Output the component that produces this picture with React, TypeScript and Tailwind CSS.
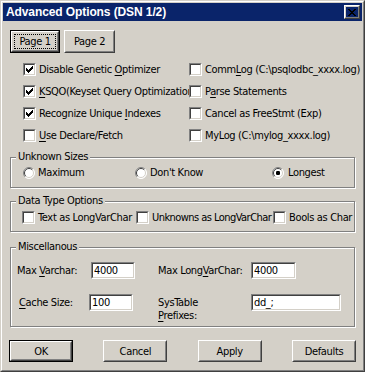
import React from "react";

const F = "font-['Liberation_Sans_Narrow','DejaVu_Sans_Condensed','Arial_Narrow',sans-serif]";

function Raised({ children, className = "", def = false, focus = false }: { children: React.ReactNode; className?: string; def?: boolean; focus?: boolean }) {
  const inner = (
    <div className="h-full w-full border border-t-white border-l-white border-r-[#404040] border-b-[#404040]">
      <div className="h-full w-full border border-t-[#d4d0c8] border-l-[#d4d0c8] border-r-[#808080] border-b-[#808080] flex items-center justify-center">
        {focus ? (
          <div className="h-[calc(100%-2px)] w-[calc(100%-2px)] border border-dotted border-black flex items-center justify-center">{children}</div>
        ) : (
          children
        )}
      </div>
    </div>
  );
  return <div className={`${className} ${def ? "border border-black" : ""}`}>{inner}</div>;
}

function Sunken({ className = "", children }: { className?: string; children?: React.ReactNode }) {
  return (
    <div className={`${className} border border-t-[#808080] border-l-[#808080] border-r-white border-b-white`}>
      <div className="h-full w-full border border-t-[#404040] border-l-[#404040] border-r-[#d4d0c8] border-b-[#d4d0c8] bg-white flex items-center overflow-hidden">
        {children}
      </div>
    </div>
  );
}

function Check({ checked = false }: { checked?: boolean }) {
  return (
    <Sunken className="w-[13px] h-[13px] shrink-0">
      {checked && (
        <svg width="9" height="9" viewBox="0 0 9 9" shapeRendering="crispEdges">
          <path
            fill="#000"
            d="M7 1h1v1h-1z M6 2h2v1h-2z M1 3h1v1h-1z M5 3h3v1h-3z M1 4h2v1h-2z M4 4h3v1h-3z M1 5h5v1h-5z M2 6h3v1h-3z M3 7h1v1h-1z"
          />
        </svg>
      )}
    </Sunken>
  );
}

function Radio({ checked = false }: { checked?: boolean }) {
  return (
    <svg width="12" height="12" viewBox="0 0 12 12" className="shrink-0">
      <circle cx="6" cy="6" r="5.5" fill="#fff" />
      <path d="M2.1 9.9 A5.5 5.5 0 0 1 9.9 2.1" stroke="#808080" strokeWidth="1" fill="none" />
      <path d="M9.9 2.1 A5.5 5.5 0 0 1 2.1 9.9" stroke="#ffffff" strokeWidth="1" fill="none" />
      <path d="M2.8 9.2 A4.5 4.5 0 0 1 9.2 2.8" stroke="#404040" strokeWidth="1" fill="none" />
      <path d="M9.2 2.8 A4.5 4.5 0 0 1 2.8 9.2" stroke="#d4d0c8" strokeWidth="1" fill="none" />
      {checked && <rect x="4" y="4" width="4" height="4" rx="1.2" fill="#000" />}
    </svg>
  );
}

function CheckItem({ label, checked = false, className = "", labelClass = "" }: { label: React.ReactNode; checked?: boolean; className?: string; labelClass?: string }) {
  return (
    <div className={`flex items-center gap-[3px] whitespace-nowrap overflow-hidden ${className}`}>
      <Check checked={checked} />
      <span className={`leading-[13px] ${labelClass}`}>{label}</span>
    </div>
  );
}

function Group({ title, className = "", children }: { title: string; className?: string; children: React.ReactNode }) {
  return (
    <div className={`relative border border-[#808080] shadow-[inset_1px_1px_0_#fff,1px_1px_0_#fff] ${className}`}>
      <span className="absolute left-[5px] top-[-8px] bg-[#d4d0c8] px-[2px] leading-[14px] whitespace-nowrap">{title}</span>
      {children}
    </div>
  );
}

const U = ({ c }: { c: string }) => <span className="underline underline-offset-[2px]">{c}</span>;

export default function App() {
  return (
    <div className={`w-[365px] h-[372px] bg-[#d4d0c8] text-[11px] tracking-[-0.35px] text-black ${F} border border-t-[#d4d0c8] border-l-[#d4d0c8] border-r-[#404040] border-b-[#404040] overflow-hidden`}>
      <div className="h-full w-full border border-t-white border-l-white border-r-[#808080] border-b-[#808080] p-[1px] flex flex-col overflow-hidden">
        <div className="h-[18px] bg-[#0a246a] flex items-center justify-between pl-[3px] pr-[2px] shrink-0">
          <span className="text-white font-bold text-[12px] tracking-[-0.1px] font-['Liberation_Sans',sans-serif] leading-none">Advanced Options (DSN 1/2)</span>
          <Raised className="w-[16px] h-[14px]">
            <svg width="8" height="7" viewBox="0 0 8 7" shapeRendering="crispEdges">
              <path fill="#000" d="M0 0h2v1h-2z M6 0h2v1h-2z M1 1h2v1h-2z M5 1h2v1h-2z M2 2h4v1h-4z M3 3h2v1h-2z M2 4h4v1h-4z M1 5h2v1h-2z M5 5h2v1h-2z M0 6h2v1h-2z M6 6h2v1h-2z" />
            </svg>
          </Raised>
        </div>

        <div className="flex flex-col px-[7px]">
          <div className="flex gap-[4px] mt-[9px]">
            <Raised className="w-[50px] h-[23px]" def focus>
              <span className="leading-none">Page 1</span>
            </Raised>
            <Raised className="w-[51px] h-[23px]">
              <span className="leading-none">Page 2</span>
            </Raised>
          </div>

          <div className="grid grid-cols-[166px_173px] mt-[5px] pl-[13px]">
            <CheckItem className="h-[22px]" checked label={<>Disable Genetic <U c="O" />ptimizer</>} />
            <CheckItem className="h-[22px]" label={<>Comm<U c="L" />og (C:\psqlodbc_xxxx.log)</>} />
            <CheckItem className="h-[22px]" checked label={<><U c="K" />SQO(Keyset Query Optimization)</>} />
            <CheckItem className="h-[22px]" label={<>P<U c="a" />rse Statements</>} />
            <CheckItem className="h-[22px]" checked label={<>Recognize Unique <U c="I" />ndexes</>} />
            <CheckItem className="h-[22px]" label={<>Cancel as FreeStmt (Exp)</>} />
            <CheckItem className="h-[22px]" label={<><U c="U" />se Declare/Fetch</>} />
            <CheckItem className="h-[22px]" label={<>MyLog (C:\mylog_xxxx.log)</>} />
          </div>

          <Group title="Unknown Sizes" className="mt-[11px] h-[31px]">
            <div className="flex items-center h-full pl-[12px]">
              <div className="w-[112px] flex items-center gap-[3px]"><Radio /><span className="leading-none">Maximum</span></div>
              <div className="w-[137px] flex items-center gap-[3px]"><Radio /><span className="leading-none">Don't Know</span></div>
              <div className="flex items-center gap-[4px]"><Radio checked /><span className="leading-none">Longest</span></div>
            </div>
          </Group>

          <Group title="Data Type Options" className="mt-[13px] h-[31px]">
            <div className="flex items-center h-full pl-[11px] pt-[2px] overflow-hidden">
              <CheckItem className="w-[114px] shrink-0" label="Text as LongVarChar" />
              <CheckItem className="w-[137px] shrink-0 gap-[2px]" labelClass="tracking-[-0.55px]" label="Unknowns as LongVarChar" />
              <CheckItem className="w-[80px] shrink-0" label="Bools as Char" />
            </div>
          </Group>

          <Group title="Miscellanous" className="mt-[15px] h-[80px]">
            <div className="flex flex-col pt-[14px]">
              <div className="flex items-center h-[17px] pl-[6px] whitespace-nowrap">
                <span className="w-[74px] leading-[13px]">Max <U c="V" />archar:</span>
                <Sunken className="w-[44px] h-[17px]"><span className="pl-[1px] leading-[13px]">4000</span></Sunken>
                <span className="ml-[23px] w-[93px] leading-[13px]">Max Long<U c="V" />arChar:</span>
                <Sunken className="w-[45px] h-[17px]"><span className="pl-[1px] leading-[13px]">4000</span></Sunken>
              </div>
              <div className="flex items-start h-[17px] mt-[15px] pl-[8px] whitespace-nowrap">
                <span className="w-[70px] self-center leading-[13px]"><U c="C" />ache Size:</span>
                <Sunken className="w-[44px] h-[17px]"><span className="pl-[1px] leading-[13px]">100</span></Sunken>
                <span className="ml-[25px] w-[93px] leading-[13px] mt-[2px]">SysTable<br /><U c="P" />refixes:</span>
                <Sunken className="w-[90px] h-[17px]"><span className="pl-[1px] leading-[14px]">dd_;</span></Sunken>
              </div>
            </div>
          </Group>

          <div className="flex justify-between mt-[13px] ml-[-1px] mr-[-1px]">
            <Raised className="w-[64px] h-[22px]" def><span className="leading-none">OK</span></Raised>
            <Raised className="w-[64px] h-[22px]"><span className="leading-none">Cancel</span></Raised>
            <Raised className="w-[64px] h-[22px]"><span className="leading-none">Apply</span></Raised>
            <Raised className="w-[64px] h-[22px]"><span className="leading-none">Defaults</span></Raised>
          </div>
        </div>
      </div>
    </div>
  );
}
